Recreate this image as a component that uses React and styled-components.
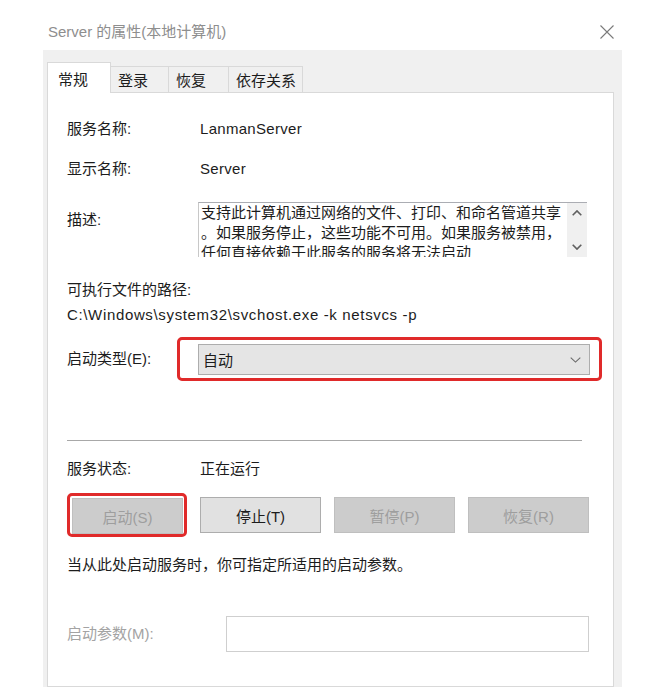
import React from "react";
import styled, { createGlobalStyle } from "styled-components";

const GlobalStyle = createGlobalStyle`
  html, body { margin: 0; padding: 0; background: #ffffff; }
  body { font-family: "Liberation Sans", "Noto Sans CJK SC", sans-serif; color: #1c1c1c; }
  * { box-sizing: border-box; }
`;

const Window = styled.div`
  width: 647px;
  height: 687px;
  overflow: hidden;
  display: flex;
  flex-direction: column;
  background: #ffffff;
`;

const TitleBar = styled.div`
  height: 50px;
  flex: none;
  display: flex;
  align-items: flex-start;
  justify-content: space-between;
  padding: 22px 33px 0 48px;
`;

const Title = styled.div`
  font-size: 15px;
  line-height: 20px;
  color: #8e8e8e;
`;

const CloseBtn = styled.div`
  width: 14px;
  height: 14px;
  margin-top: 3px;
  display: flex;
`;

const Frame = styled.div`
  margin-left: 43px;
  width: 579px;
  flex: 1;
  background: #f0f0f0;
  padding: 12px 8px 0 4px;
  display: flex;
  flex-direction: column;
`;

const TabRow = styled.div`
  display: flex;
  align-items: flex-end;
  height: 31px;
  flex: none;
`;

const Tab = styled.div`
  width: ${(p) => p.$w}px;
  height: ${(p) => (p.$active ? 31 : 27)}px;
  padding-left: ${(p) => (p.$active ? 10 : 7)}px;
  display: flex;
  align-items: center;
  font-size: 15px;
  color: #1c1c1c;
  background: ${(p) => (p.$active ? "#ffffff" : "#f0f0f0")};
  border-top: 1px solid #d9d9d9;
  border-right: 1px solid #d9d9d9;
  border-left: ${(p) => (p.$active ? "1px solid #d9d9d9" : "none")};
  border-bottom: ${(p) => (p.$active ? "none" : "1px solid #d9d9d9")};
`;

const TabFill = styled.div`
  flex: 1;
  height: 31px;
  border-bottom: 1px solid #d9d9d9;
`;

const Panel = styled.div`
  flex: 1;
  background: #ffffff;
  border: 1px solid #d9d9d9;
  border-top: none;
  padding: 16px 0 0 19px;
  display: flex;
  flex-direction: column;
`;

const Row = styled.div`
  display: flex;
  align-items: ${(p) => p.$align || "center"};
  height: ${(p) => p.$h}px;
  margin-top: ${(p) => p.$mt || 0}px;
  flex: none;
`;

const Label = styled.div`
  width: ${(p) => p.$w || 133}px;
  flex: none;
  font-size: 15px;
  line-height: 20px;
  padding-top: ${(p) => p.$pt || 0}px;
  color: ${(p) => (p.$disabled ? "#a3a3a3" : "#1c1c1c")};
  white-space: nowrap;
`;

const Value = styled.div`
  font-size: 15px;
  line-height: 20px;
  letter-spacing: ${(p) => p.$ls || 0}px;
  color: #1c1c1c;
  white-space: nowrap;
`;

const DescBox = styled.div`
  width: 389px;
  height: 55px;
  display: flex;
  border-top: 1px solid #abadb3;
  border-left: 1px solid #c8c8c8;
  overflow: hidden;
`;

const DescText = styled.div`
  flex: 1;
  padding: 0 0 0 2px;
  font-size: 15px;
  line-height: 20px;
  overflow: hidden;
  color: #1c1c1c;
`;

const DescLine = styled.div`
  white-space: nowrap;
`;

const ScrollBar = styled.div`
  width: 20px;
  flex: none;
  background: #f0f0f0;
  display: flex;
  flex-direction: column;
  justify-content: space-between;
`;

const ArrowBox = styled.div`
  height: 20px;
  display: flex;
  align-items: center;
  justify-content: center;
`;

const RedBox = styled.div`
  width: ${(p) => p.$w}px;
  height: 44px;
  border: 3px solid #e02a2a;
  border-radius: 5px;
  padding: ${(p) => p.$pad};
  display: flex;
  align-items: flex-start;
  flex: none;
`;

const Combo = styled.div`
  width: 392px;
  height: 31px;
  background: #e5e5e5;
  border: 1px solid #adadad;
  display: flex;
  align-items: center;
  justify-content: space-between;
  padding: 0 8px 0 4px;
  font-size: 15px;
`;

const Separator = styled.div`
  width: 515px;
  height: 1px;
  margin-top: 59px;
  background: #a8a8a8;
  flex: none;
`;

const ButtonRow = styled.div`
  display: flex;
  align-items: center;
  gap: 13px;
  margin-top: 14px;
  height: 44px;
  flex: none;
`;

const Button = styled.div`
  width: ${(p) => p.$w || 121}px;
  height: 36px;
  flex: none;
  display: flex;
  align-items: center;
  justify-content: center;
  font-size: 15px;
  background: ${(p) => (p.$disabled ? "#cccccc" : "#e1e1e1")};
  border: 1px solid ${(p) => (p.$disabled ? "#bfbfbf" : "#adadad")};
  color: ${(p) => (p.$disabled ? "#9e9e9e" : "#1c1c1c")};
`;

const Input = styled.div`
  width: 363px;
  height: 36px;
  border: 1px solid #cfcfcf;
  background: #ffffff;
`;

const XIcon = () => (
  <svg width="14" height="14" viewBox="0 0 14 14">
    <path d="M0.5 0.5 L13.5 13.5 M13.5 0.5 L0.5 13.5" stroke="#7a7a7a" strokeWidth="1.1" fill="none" />
  </svg>
);

const Chevron = ({ up, color = "#555", w = 10, h = 6, sw = 1.2 }) => (
  <svg width={w} height={h} viewBox={`0 0 ${w} ${h}`}>
    <polyline
      points={up ? `0.7,${h - 0.7} ${w / 2},0.9 ${w - 0.7},${h - 0.7}` : `0.7,0.7 ${w / 2},${h - 0.9} ${w - 0.7},0.7`}
      stroke={color}
      strokeWidth={sw}
      fill="none"
    />
  </svg>
);

export default function App() {
  return (
    <>
      <GlobalStyle />
      <Window>
        <TitleBar>
          <Title>Server 的属性(本地计算机)</Title>
          <CloseBtn>
            <XIcon />
          </CloseBtn>
        </TitleBar>
        <Frame>
          <TabRow>
            <Tab $active $w={64}>常规</Tab>
            <Tab $w={58}>登录</Tab>
            <Tab $w={60}>恢复</Tab>
            <Tab $w={74}>依存关系</Tab>
            <TabFill />
          </TabRow>
          <Panel>
            <Row $h={40}>
              <Label>服务名称:</Label>
              <Value $ls={0.3}>LanmanServer</Value>
            </Row>
            <Row $h={40}>
              <Label>显示名称:</Label>
              <Value $ls={0.3}>Server</Value>
            </Row>
            <Row $h={55} $mt={13} $align="flex-start">
              <Label $w={131} $pt={8}>描述:</Label>
              <DescBox>
                <DescText>
                  <DescLine>支持此计算机通过网络的文件、打印、和命名管道共享</DescLine>
                  <DescLine>。如果服务停止，这些功能不可用。如果服务被禁用，</DescLine>
                  <DescLine>任何直接依赖于此服务的服务将无法启动</DescLine>
                </DescText>
                <ScrollBar>
                  <ArrowBox>
                    <Chevron up color="#606060" w={10} h={6} sw={1.6} />
                  </ArrowBox>
                  <ArrowBox>
                    <Chevron color="#606060" w={10} h={6} sw={1.6} />
                  </ArrowBox>
                </ScrollBar>
              </DescBox>
            </Row>
            <Row $h={20} $mt={23}>
              <Label $w={300}>可执行文件的路径:</Label>
            </Row>
            <Row $h={20} $mt={5}>
              <Value $ls={0.65}>C:\Windows\system32\svchost.exe -k netsvcs -p</Value>
            </Row>
            <Row $h={44} $mt={12}>
              <Label $w={110}>启动类型(E):</Label>
              <RedBox $w={425} $pad="4px 9px 0 18px">
                <Combo>
                  <span>自动</span>
                  <Chevron color="#6a6a6a" w={11} h={6} sw={1.1} />
                </Combo>
              </RedBox>
            </Row>
            <Separator />
            <Row $h={20} $mt={18}>
              <Label>服务状态:</Label>
              <Value>正在运行</Value>
            </Row>
            <ButtonRow>
              <RedBox $w={120} $pad="2px 1px 0 2px">
                <Button $disabled $w={111}>启动(S)</Button>
              </RedBox>
              <Button>停止(T)</Button>
              <Button $disabled>暂停(P)</Button>
              <Button $disabled>恢复(R)</Button>
            </ButtonRow>
            <Row $h={20} $mt={18}>
              <Value>当从此处启动服务时，你可指定所适用的启动参数。</Value>
            </Row>
            <Row $h={36} $mt={41}>
              <Label $w={159} $disabled>启动参数(M):</Label>
              <Input />
            </Row>
          </Panel>
        </Frame>
      </Window>
    </>
  );
}
